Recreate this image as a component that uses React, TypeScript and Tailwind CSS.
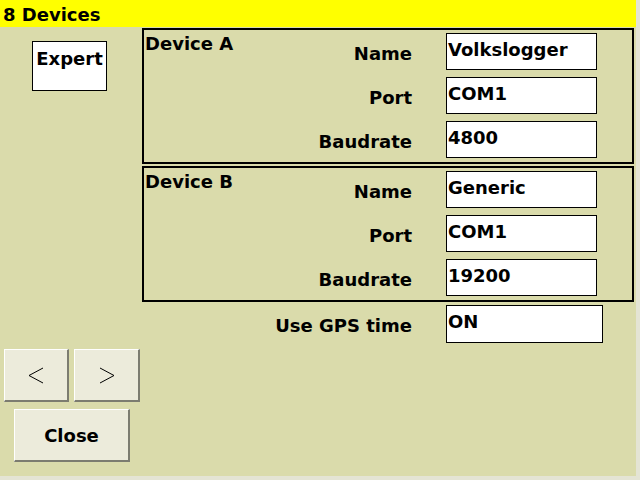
import React from 'react'

const font = "font-['DejaVu_Sans',sans-serif] font-bold text-[18px] leading-[21px] text-black"

type Row = { label: string; value: string }

function Field({ value, wide }: { value: string; wide?: boolean }) {
  return (
    <div
      className={`${wide ? 'w-[157px] h-[38px]' : 'w-[151px] h-[37px]'} bg-white border border-black pl-[1px] pt-[5px] whitespace-nowrap overflow-hidden`}
    >
      {value}
    </div>
  )
}

function DeviceBox({ title, rows, className }: { title: string; rows: Row[]; className?: string }) {
  return (
    <div className={`flex h-[136px] w-[492px] border-2 border-black ${className ?? ''}`}>
      <div className="flex-1 pl-[1px] pt-[3px] whitespace-nowrap">{title}</div>
      <div className="flex flex-col gap-[7px] pt-[3px] pr-[35px]">
        {rows.map((r) => (
          <div key={r.label} className="flex">
            <div className="w-[120px] h-[37px] pt-[10px] text-right">{r.label}</div>
            <div className="ml-[34px]">
              <Field value={r.value} />
            </div>
          </div>
        ))}
      </div>
    </div>
  )
}

function Btn({ children, className }: { children: React.ReactNode; className?: string }) {
  return (
    <button
      className={`flex items-center justify-center bg-[#ecebdb] border-t border-l border-t-white border-l-white border-r-2 border-b-2 border-r-[#7c7c70] border-b-[#7c7c70] ${className ?? ''}`}
    >
      {children}
    </button>
  )
}

export default function App() {
  return (
    <div className={`${font} w-[640px] h-[480px] flex flex-col bg-[#dadbab] border-r-[4px] border-b-[4px] border-r-[#e4e4d4] border-b-[#e4e4d4]`}>
      <div className="h-[27px] bg-[#ffff00] pl-[3px] pt-[4px] shrink-0">8 Devices</div>
      <div className="flex flex-1">
        {/* left column */}
        <div className="w-[142px] flex flex-col">
          <div className="ml-[32px] mt-[14px] w-[75px] h-[50px] bg-white border border-black text-center pt-[6px]">
            Expert
          </div>
          <div className="mt-auto mb-[14px]">
            <div className="flex gap-[5px] pl-[4px]">
              <Btn className="w-[65px] h-[53px]">
                <svg width="16" height="17" viewBox="0 0 16 17">
                  <polyline points="15,1 1,8.5 15,16" fill="none" stroke="black" strokeWidth="1" />
                </svg>
              </Btn>
              <Btn className="w-[66px] h-[53px]">
                <svg width="16" height="17" viewBox="0 0 16 17">
                  <polyline points="1,1 15,8.5 1,16" fill="none" stroke="black" strokeWidth="1" />
                </svg>
              </Btn>
            </div>
            <Btn className="ml-[14px] mt-[7px] w-[116px] h-[53px]">Close</Btn>
          </div>
        </div>

        {/* right column */}
        <div className="flex flex-col pt-[1px]">
          <DeviceBox
            title="Device A"
            rows={[
              { label: 'Name', value: 'Volkslogger' },
              { label: 'Port', value: 'COM1' },
              { label: 'Baudrate', value: '4800' },
            ]}
          />
          <DeviceBox
            title="Device B"
            className="mt-[2px]"
            rows={[
              { label: 'Name', value: 'Generic' },
              { label: 'Port', value: 'COM1' },
              { label: 'Baudrate', value: '19200' },
            ]}
          />
          <div className="flex mt-[3px]">
            <div className="w-[270px] h-[38px] pt-[10px] text-right">Use GPS time</div>
            <div className="ml-[34px]">
              <Field value="ON" wide />
            </div>
          </div>
        </div>
      </div>
    </div>
  )
}
